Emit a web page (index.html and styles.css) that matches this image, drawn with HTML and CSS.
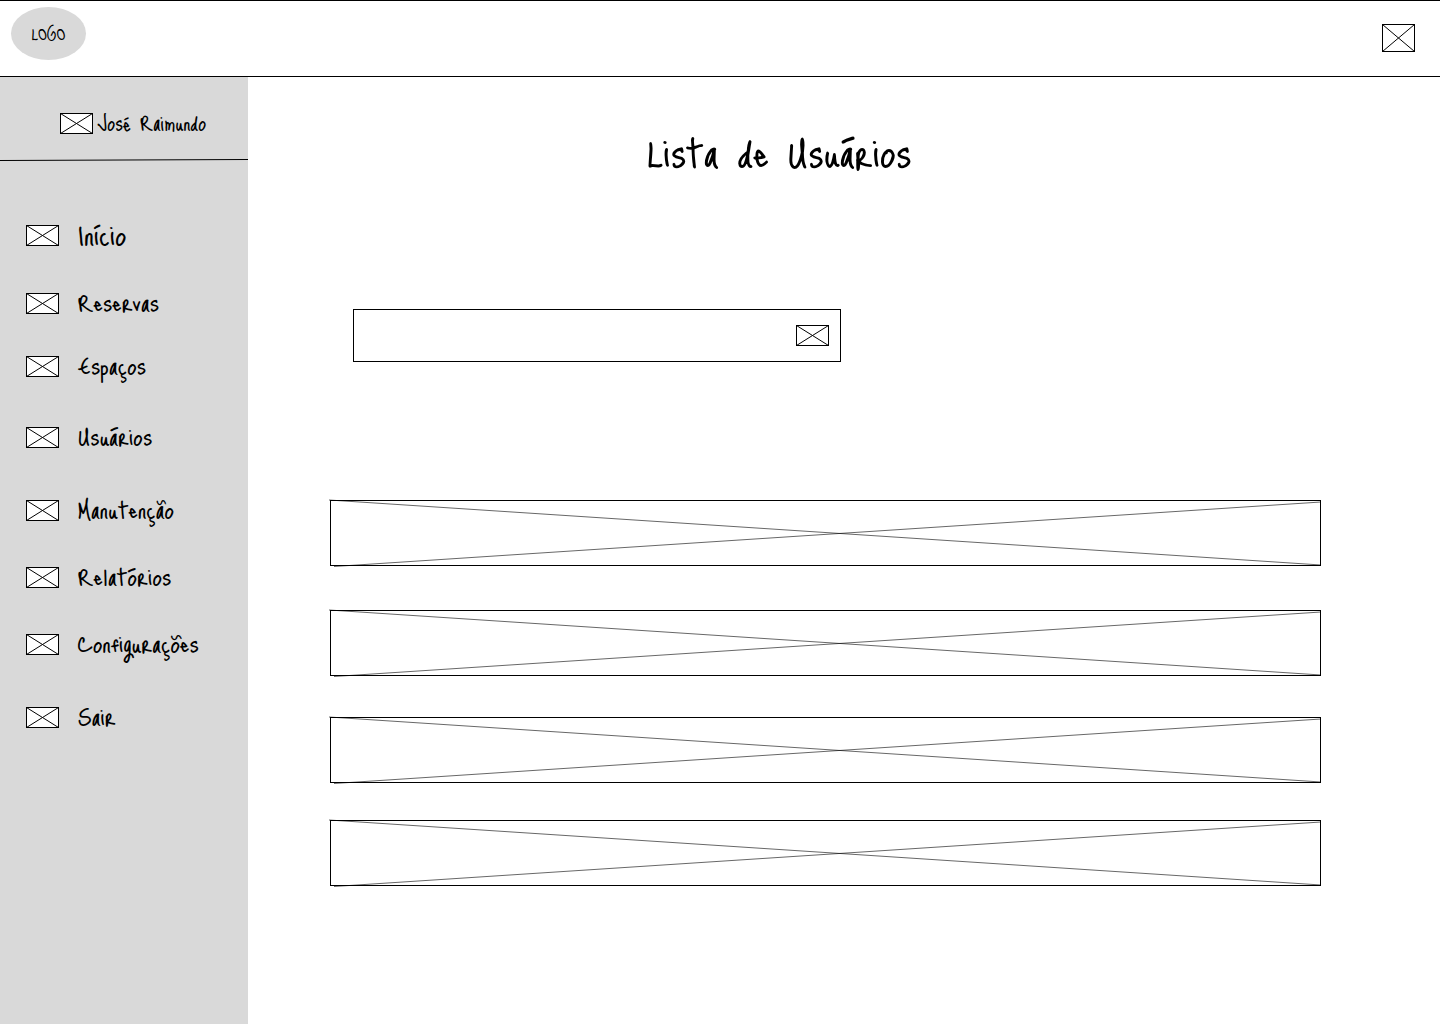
FILE: index.html
```html
<!DOCTYPE html>
<html lang="pt-BR">
<head>
<meta charset="utf-8">
<meta name="viewport" content="width=device-width, initial-scale=1">
<title>Lista de Usuários</title>
<link rel="stylesheet" href="styles.css">
</head>
<body>
<svg class="defs" aria-hidden="true">
  <symbol id="box" viewBox="0 0 33 21">
    <rect x=".5" y=".5" width="32" height="20" fill="#fff" stroke="#000"/>
    <path d="M.5 .5L32.5 20.5M.5 20.5L32.5 .5" stroke="#000"/>
  </symbol>
</svg>
<header class="topbar">
  <a class="logo" href="#">LOGO</a>
  <button class="icon-button" type="button" aria-label="Menu">
    <svg class="menu-icon" viewBox="0 0 33 28"><rect x=".5" y=".5" width="32" height="27" fill="#fff" stroke="#000"/><path d="M.5 .5L32.5 27.5M.5 27.5L32.5 .5" stroke="#000"/></svg>
  </button>
</header>
<div class="layout">
  <aside class="sidebar">
    <div class="profile"><svg class="icon"><use href="#box"/></svg><span>José Raimundo</span></div>
    <svg class="divider" viewBox="0 0 248 2" preserveAspectRatio="none"><path d="M0 1.5L248 .5" stroke="#000"/></svg>
    <nav class="menu">
      <a class="home" href="#"><svg class="icon"><use href="#box"/></svg>Início</a>
      <a href="#"><svg class="icon"><use href="#box"/></svg>Reservas</a>
      <a href="#"><svg class="icon"><use href="#box"/></svg>Espaços</a>
      <a href="#"><svg class="icon"><use href="#box"/></svg>Usuários</a>
      <a href="#"><svg class="icon"><use href="#box"/></svg>Manutenção</a>
      <a href="#"><svg class="icon"><use href="#box"/></svg>Relatórios</a>
      <a href="#"><svg class="icon"><use href="#box"/></svg>Configurações</a>
      <a href="#"><svg class="icon"><use href="#box"/></svg>Sair</a>
    </nav>
  </aside>
  <main class="content">
    <h1 class="title">Lista de Usuários</h1>
    <form class="search">
      <input class="search-input" type="text" aria-label="Buscar usuário">
      <button class="icon-button" type="button" aria-label="Buscar"><svg class="icon"><use href="#box"/></svg></button>
    </form>
    <ul class="users">
      <li class="user"><svg class="cross" viewBox="0 0 991 66" preserveAspectRatio="none"><path d="M-1 0L991 65M4 66.500L991 2"/></svg></li>
      <li class="user"><svg class="cross" viewBox="0 0 991 66" preserveAspectRatio="none"><path d="M-1 0L991 65M4 66.500L991 2"/></svg></li>
      <li class="user"><svg class="cross" viewBox="0 0 991 66" preserveAspectRatio="none"><path d="M-1 0L991 65M4 66.500L991 2"/></svg></li>
      <li class="user"><svg class="cross" viewBox="0 0 991 66" preserveAspectRatio="none"><path d="M-1 0L991 65M4 66.500L991 2"/></svg></li>
    </ul>
  </main>
</div>
</body>
</html>
```
FILE: styles.css
```css
* { box-sizing: border-box; }

body {
  margin: 0;
  min-height: 100vh;
  display: flex;
  flex-direction: column;
  background: #fff;
  color: #000;
  font-family: "Just Me Again Down Here", Lato, sans-serif;
}

a { color: inherit; text-decoration: none; }

.defs { position: absolute; width: 0; height: 0; }

.topbar {
  display: flex;
  justify-content: space-between;
  align-items: flex-start;
  padding: 6px 25px 16px 11px;
  border-top: 1px solid #000;
  border-bottom: 1px solid #000;
}

.logo {
  display: flex;
  align-items: center;
  justify-content: center;
  width: 75px;
  height: 53px;
  border-radius: 50%;
  background: #d9d9d9;
  font-size: 20px;
}

.icon-button {
  display: flex;
  padding: 0;
  border: 0;
  background: none;
}

.topbar .icon-button { margin-top: 17px; }

.icon { display: block; flex: none; width: 33px; height: 21px; }
.menu-icon { display: block; width: 33px; height: 28px; }

.layout { display: flex; flex: 1; }

.sidebar {
  flex: none;
  width: 248px;
  background: #d9d9d9;
}

.profile {
  display: flex;
  align-items: center;
  gap: 4px;
  padding: 36px 16px 25px 60px;
  font-size: 25px;
  line-height: 21px;
  white-space: nowrap;
}

.divider { display: block; width: 100%; height: 2px; }

.menu {
  display: grid;
  grid-template-rows: 68px 63px 71px 73px 67px 67px 73px 21px;
  align-items: start;
  padding: 64px 16px 64px 26px;
  font-size: 30px;
  line-height: 18px;
}

.menu a { display: flex; align-items: flex-start; gap: 19px; }

.menu .home { font-size: 35px; }

.content { flex: 1; padding: 50px 119px 64px 82px; }

.title {
  margin: 0 92px 0 0;
  font-size: 50px;
  line-height: 48px;
  font-weight: 400;
  text-align: center;
}

.search {
  display: flex;
  align-items: center;
  max-width: 488px;
  margin: 134px 0 0 23px;
  padding-right: 11px;
  border: 1px solid #000;
}

.search-input {
  flex: 1;
  min-width: 0;
  height: 51px;
  padding: 0 16px;
  border: 0;
  outline: 0;
  background: none;
  font: inherit;
  font-size: 30px;
}

.users {
  display: grid;
  grid-template-rows: 110px 107px 103px 66px;
  align-items: start;
  margin: 138px 0 0;
  padding: 0;
  list-style: none;
}

.user {
  height: 66px;
  box-shadow: inset 0 0 0 1px #000;
}

.cross {
  display: block;
  width: 100%;
  height: 66px;
  overflow: visible;
  fill: none;
  stroke: #000;
  stroke-width: .6;
}
```
